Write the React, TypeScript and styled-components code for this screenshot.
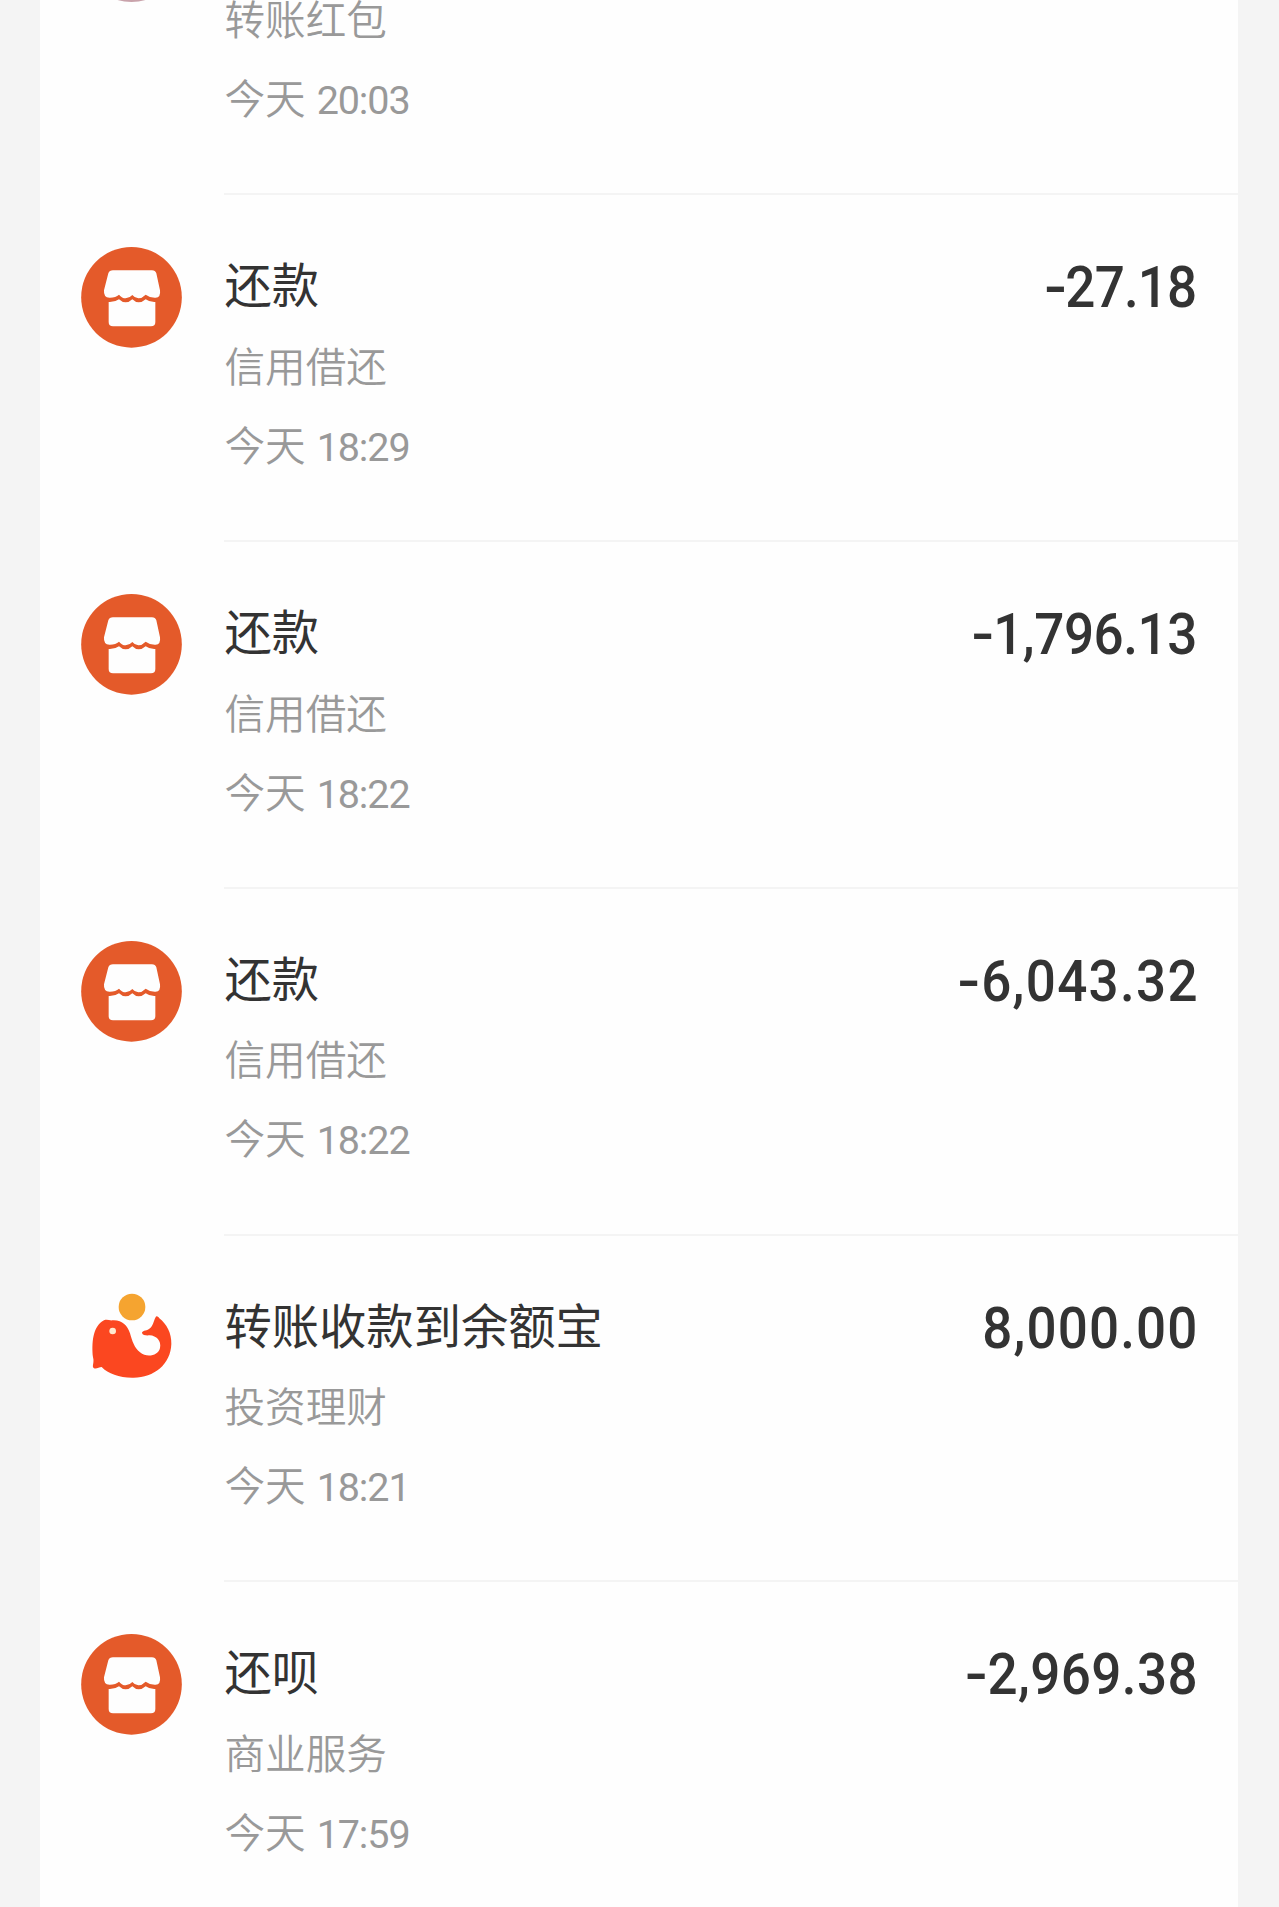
import React from "react";
import styled, { createGlobalStyle } from "styled-components";

const GlobalStyle = createGlobalStyle`
  * { box-sizing: border-box; }
  body { margin: 0; background: #f4f4f4; }
`;

const Page = styled.div`
  height: 1907px;
  overflow: hidden;
  padding: 0 41px 0 40px;
  background: #f4f4f4;
  font-family: "Noto Sans CJK SC", sans-serif;
`;

const Card = styled.main`
  height: 100%;
  overflow: hidden;
  background: #fefefe;
`;

/* The list is scrolled part-way through its first entry. */
const List = styled.ul`
  margin: -151.4px 0 0;
  padding: 0;
  list-style: none;
`;

const Row = styled.li`
  display: flex;
  height: 346.75px;
  padding-left: 41.3px;
`;

const IconSlot = styled.div`
  flex: none;
  width: 101px;
  height: 101px;
  margin: 52px 42.2px 0 0;

  svg { display: block; width: 101px; height: 101px; }
`;

const Avatar = styled.div`
  width: 101px;
  height: 101px;
  border-radius: 50%;
  background: #c9a3ab;
`;

const Content = styled.div`
  flex: 1;
  display: flex;
  justify-content: space-between;
  align-items: flex-start;
  padding: 58px 41px 0 0;
  border-bottom: 2px solid #f4f4f4;
`;

const Details = styled.div`
  display: flex;
  flex-direction: column;
`;

const Title = styled.div`
  font-size: 47.3px;
  line-height: 60px;
  color: #333;
`;

const Category = styled.div`
  margin-top: 21.5px;
  font-size: 40.6px;
  line-height: 60px;
  color: #999;
  font-weight: 350;
`;

const Time = styled.div`
  display: flex;
  align-items: baseline;
  gap: 11px;
  margin-top: 19px;
  font-size: 40.6px;
  line-height: 60px;
  color: #999;
  font-weight: 350;
`;

const Clock = styled.span`
  font-family: Roboto, sans-serif;
  font-size: 39.5px;
  font-weight: 400;
  letter-spacing: -1.1px;
`;

/* Digits are set slightly condensed, anchored to the right edge. */
const Amount = styled.div<{ $tracking: number }>`
  padding-top: 5px;
  font-family: Roboto, sans-serif;
  font-size: 57px;
  font-weight: 500;
  line-height: 60px;
  letter-spacing: ${(p) => p.$tracking}px;
  margin-right: ${(p) => -0.8 - p.$tracking}px;
  color: #333;
  transform: scaleX(0.93);
  transform-origin: right center;
`;

const Sign = styled.span`
  display: inline-block;
  margin-right: 2px;
  transform: scaleX(1.25);
`;

function StoreIcon() {
  return (
    <svg viewBox="34 22 303 303">
      <circle cx="185.500" cy="173" r="151" fill="#e45a2a" />
      <path
        fill="#fefefe"
        d="M130 92H247Q257 92 260 101L271 152Q274 176 255 174Q240 174 228 165Q217 176 206 176Q196 176 188 166Q179 176 168 176Q157 176 148 165Q138 174 121 174Q101 175 103 152L116 101Q119 92 130 92Z"
      />
      <path
        fill="#fefefe"
        d="M117 187Q136 188 148 179Q157 188 168 188Q179 188 188 179Q197 188 207 188Q218 188 228 179Q240 188 257 187V247Q257 260 244 260H130Q117 260 117 247Z"
      />
    </svg>
  );
}

function WhaleIcon() {
  return (
    <svg viewBox="34 22 303 303">
      <circle cx="187" cy="79" r="40" fill="#f5a430" />
      <path
        fill="#fb4720"
        d="M70 230C66 190 68 137 103 119C112 115 119 120 128 119C157 117 173 134 181 158C188 183 194 201 211 215C232 233 266 225 271 202C276 181 260 165 240 164C230 165 219 164 217 157C217 150 228 151 238 145C250 137 252 121 257 111C260 105 264 106 269 113C291 130 306 158 305 190C303 251 253 291 192 291C151 292 116 280 96 259C88 259 81 266 73 263C65 259 75 246 70 230Z"
      />
      <circle cx="129" cy="151" r="10" fill="#ffe9cf" />
    </svg>
  );
}

const icons = {
  avatar: <Avatar />,
  store: <StoreIcon />,
  whale: <WhaleIcon />,
};

interface Entry {
  icon: keyof typeof icons;
  title?: string;
  category: string;
  clock: string;
  amount?: string;
  tracking?: number;
}

const entries: Entry[] = [
  { icon: "avatar", category: "转账红包", clock: "20:03" },
  { icon: "store", title: "还款", category: "信用借还", clock: "18:29", amount: "-27.18", tracking: -0.9 },
  { icon: "store", title: "还款", category: "信用借还", clock: "18:22", amount: "-1,796.13", tracking: -0.5 },
  { icon: "store", title: "还款", category: "信用借还", clock: "18:22", amount: "-6,043.32", tracking: 1.4 },
  { icon: "whale", title: "转账收款到余额宝", category: "投资理财", clock: "18:21", amount: "8,000.00", tracking: 1.2 },
  { icon: "store", title: "还呗", category: "商业服务", clock: "17:59", amount: "-2,969.38", tracking: 0.4 },
];

function AmountText({ value, tracking }: { value: string; tracking: number }) {
  const negative = value.startsWith("-");
  return (
    <Amount $tracking={tracking}>
      {negative && <Sign>-</Sign>}
      {negative ? value.slice(1) : value}
    </Amount>
  );
}

export default function App() {
  return (
    <Page>
      <GlobalStyle />
      <Card>
        <List>
          {entries.map((entry, i) => (
            <Row key={i}>
              <IconSlot>{icons[entry.icon]}</IconSlot>
              <Content>
                <Details>
                  <Title>{entry.title ?? "\u00a0"}</Title>
                  <Category>{entry.category}</Category>
                  <Time>
                    今天<Clock>{entry.clock}</Clock>
                  </Time>
                </Details>
                {entry.amount && (
                  <AmountText value={entry.amount} tracking={entry.tracking ?? 0} />
                )}
              </Content>
            </Row>
          ))}
        </List>
      </Card>
    </Page>
  );
}
